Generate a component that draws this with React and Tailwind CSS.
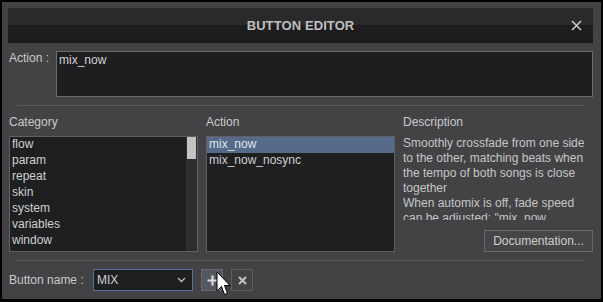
import React from 'react'

const font = { fontFamily: '"Liberation Sans", Arial, sans-serif' }

const categories = ['flow', 'param', 'repeat', 'skin', 'system', 'variables', 'window']
const actions = ['mix_now', 'mix_now_nosync']

function Cursor() {
  return (
    <svg className="absolute left-[216px] top-[271px]" width="15" height="27" viewBox="0 0 15 27">
      <path d="M1 1 L1 20 L5.5 15.5 L8.5 23.5 L11.5 22.3 L8.5 14.5 L14 14.5 Z" fill="#fff" stroke="#000" strokeWidth="1" strokeLinejoin="round" />
    </svg>
  )
}

export default function App() {
  return (
    <div className="relative w-[603px] h-[302px] bg-black pl-[2px] pt-[2px] overflow-hidden" style={font}>
      <div className="w-[599px] h-[297px] bg-[#434346] pl-[6px] pt-[6px] text-[12px] text-[#c9c9c9]">
        {/* Title bar */}
        <div className="relative w-[585px] h-[35px] flex items-center justify-center bg-[linear-gradient(to_bottom,#2a2a2d_50%,#1d1d1f_50%)]">
          <span className="text-[13px] font-bold tracking-[0.1px] text-[#bfbfbf]">BUTTON EDITOR</span>
          <svg className="absolute right-[11px] top-[12px]" width="11" height="11" viewBox="0 0 11 11">
            <path d="M1 1 L10 10 M10 1 L1 10" stroke="#c8c8c8" strokeWidth="1.6" />
          </svg>
        </div>

        {/* Action field */}
        <div className="flex mt-[8px]">
          <span className="w-[48px] pl-[1px] leading-[14px]">Action :</span>
          <div className="w-[537px] h-[46px] bg-[#1e1e21] border border-[#6c6c70] px-[2px] pt-[1px] leading-[14px] text-[#d2d2d2]">mix_now</div>
        </div>

        <div className="ml-[9px] mt-[8px] w-[568px] h-px bg-[#5a5a5e]" />

        {/* Three columns */}
        <div className="flex mt-[9px] gap-[8px] pl-[1px]">
          <div className="w-[189px] flex flex-col">
            <span className="leading-[14px] h-[21px]">Category</span>
            <div className="h-[116px] bg-[#1e1f21] border border-[#606064] flex">
              <div className="flex-1 pl-[2px] flex flex-col text-[#d0d0d0]">
                {categories.map((c) => (
                  <div key={c} className="h-[16px] leading-[14px]">{c}</div>
                ))}
              </div>
              <div className="w-[11px] bg-[#2e2e31] pl-[1px] pr-[1px]">
                <div className="h-[22px] bg-[#c3c3c5]" />
              </div>
            </div>
          </div>

          <div className="w-[189px] flex flex-col">
            <span className="leading-[14px] h-[21px]">Action</span>
            <div className="h-[116px] bg-[#1e1f21] border border-[#606064] flex flex-col text-[#d0d0d0]">
              {actions.map((a, i) => (
                <div key={a} className={`h-[16px] leading-[14px] pl-[2px] ${i === 0 ? 'bg-[#566b8b] text-[#dfe4ea]' : ''}`}>{a}</div>
              ))}
            </div>
          </div>

          <div className="w-[190px] flex flex-col">
            <span className="leading-[14px] h-[21px]">Description</span>
            <div className="h-[84px] overflow-hidden leading-[15px] text-[#c6c6c6]">
              Smoothly crossfade from one side to the other, matching beats when the tempo of both songs is close together
              <br />
              When automix is off, fade speed can be adjusted: "mix_now 4000ms"
            </div>
            <div className="flex justify-end mt-[10px]">
              <button className="w-[109px] h-[22px] border border-[#68686c] bg-[#464649] text-[#cfcfcf] leading-[14px]">Documentation...</button>
            </div>
          </div>
        </div>

        <div className="ml-[9px] mt-[8px] w-[568px] h-px bg-[#5a5a5e]" />

        {/* Button name row */}
        <div className="flex items-center mt-[8px] pl-[1px]">
          <span className="w-[84px] leading-[14px]">Button name :</span>
          <div className="w-[100px] h-[22px] bg-[#1e1f21] border border-[#51709a] flex items-center justify-between pl-[3px] pr-[6px] text-[#d0d0d0]">
            <span className="leading-[14px]">MIX</span>
            <svg width="9" height="6" viewBox="0 0 9 6">
              <path d="M1 1 L4.5 4.5 L8 1" stroke="#bdbdbd" strokeWidth="1.4" fill="none" />
            </svg>
          </div>
          <div className="ml-[8px] w-[22px] h-[22px] bg-[#545961] border border-[#63686f] flex items-center justify-center">
            <svg width="11" height="11" viewBox="0 0 11 11">
              <path d="M5.5 0.5 V10.5 M0.5 5.5 H10.5" stroke="#dcdcdc" strokeWidth="2.2" />
            </svg>
          </div>
          <div className="ml-[8px] w-[22px] h-[22px] bg-[#434346] border border-[#5f5f63] flex items-center justify-center">
            <svg width="9" height="9" viewBox="0 0 9 9">
              <path d="M1 1 L8 8 M8 1 L1 8" stroke="#c4c4c4" strokeWidth="2" />
            </svg>
          </div>
        </div>
      </div>
      <Cursor />
    </div>
  )
}
